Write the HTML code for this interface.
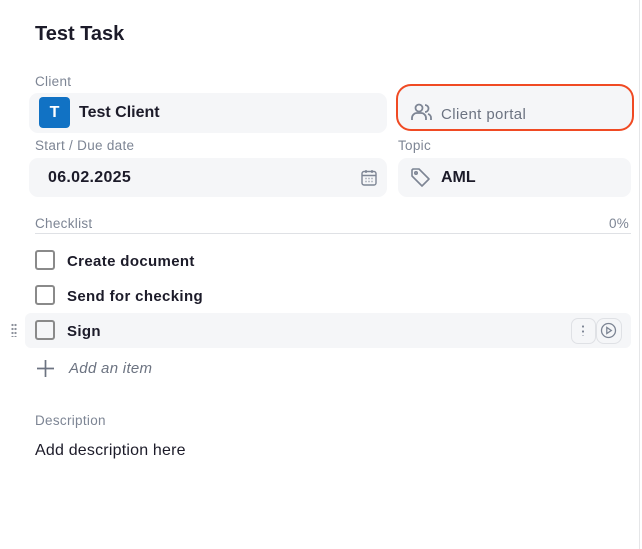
<!DOCTYPE html><html><head><style>
body{margin:0;width:642px;height:549px;background:#fff;font-family:"Liberation Sans",sans-serif;position:relative;overflow:hidden;color:#1c1b29}
.a{position:absolute}
.lbl{font-size:13.5px;color:#7d8594;letter-spacing:.3px}
.box{background:#f5f6f8;border-radius:9px}
.cb{position:absolute;left:35px;width:16px;height:16px;border:2px solid #8a8a8a;border-radius:3px}
.it{position:absolute;left:67px;font-size:15px;font-weight:bold;color:#1c1b29;letter-spacing:.35px}
</style></head><body>
<div class="a" style="left:35px;top:23px;font-size:20px;font-weight:bold">Test Task</div>
<div class="a lbl" style="left:35px;top:74px">Client</div>
<div class="a box" style="left:29px;top:93px;width:358px;height:40px"></div>
<div class="a" style="left:39px;top:97px;width:31px;height:31px;background:#1172c4;border-radius:4px;color:#fff;font-weight:bold;font-size:16px;text-align:center;line-height:31px">T</div>
<div class="a" style="left:79px;top:104px;font-size:16px;font-weight:bold">Test Client</div>
<div class="a" style="left:396px;top:84px;width:234px;height:43px;border:2px solid #f04a23;border-radius:15px;background:#f5f6f8"></div>
<svg class="a" style="left:411px;top:103px" width="22" height="18" viewBox="0 0 22 18" fill="none" stroke="#7d8594" stroke-width="1.8"><circle cx="8" cy="5" r="3.5"/><path d="M1 17v-2a5 5 0 0 1 5-5h4a5 5 0 0 1 5 5v2"/><path d="M14 2a3.5 3.5 0 0 1 0 7M17 11a4 4 0 0 1 3 4v2"/></svg>
<div class="a" style="left:441px;top:106px;font-size:15px;color:#6c7381;letter-spacing:.4px">Client portal</div>
<div class="a lbl" style="left:35px;top:138px">Start / Due date</div>
<div class="a lbl" style="left:398px;top:138px">Topic</div>
<div class="a box" style="left:29px;top:158px;width:358px;height:39px"></div>
<div class="a" style="left:48px;top:169px;font-size:16px;font-weight:bold;letter-spacing:.3px">06.02.2025</div>
<svg class="a" style="left:361px;top:169px" width="16" height="17" viewBox="0 0 16 17" fill="none" stroke="#7d8594" stroke-width="1.4"><rect x="1" y="2.5" width="14" height="13.5" rx="2"/><path d="M1 6.5h14M5 1v3M11 1v3"/><path d="M4.5 9.5h1M7.5 9.5h1M10.5 9.5h1M4.5 12.5h1M7.5 12.5h1M10.5 12.5h1"/></svg>
<div class="a box" style="left:398px;top:158px;width:233px;height:39px"></div>
<svg class="a" style="left:410px;top:167px" width="22" height="22" viewBox="0 0 22 22" fill="none" stroke="#7d8594" stroke-width="1.6"><path d="M2 3v6l10 10 7-7L9 2H3z" stroke-linejoin="round"/><circle cx="6" cy="6" r="1.2"/></svg>
<div class="a" style="left:441px;top:169px;font-size:16px;font-weight:bold">AML</div>
<div class="a lbl" style="left:35px;top:216px">Checklist</div>
<div class="a lbl" style="left:609px;top:216px">0%</div>
<div class="a" style="left:35px;top:233px;width:596px;height:1px;background:#dfe1e5"></div>
<div class="cb" style="top:250px"></div><div class="it" style="top:253px">Create document</div>
<div class="cb" style="top:285px"></div><div class="it" style="top:288px">Send for checking</div>
<div class="a" style="left:25px;top:313px;width:606px;height:35px;background:#f5f6f8;border-radius:6px"></div>
<div class="a" style="left:11px;top:323px;width:6px;height:14px;background:radial-gradient(circle,#8a8f99 1px,transparent 1.3px) 0 0/3px 4px"></div>
<div class="cb" style="top:320px"></div><div class="it" style="top:323px">Sign</div>
<div class="a" style="left:571px;top:318px;width:23px;height:24px;border:1px solid #dfe1e5;border-radius:7px;background:#f5f6f8"></div>
<div class="a" style="left:582px;top:324px;width:2px;height:12px;background:radial-gradient(circle,#7d8594 1px,transparent 1.2px) 0 0/2px 5px"></div>
<div class="a" style="left:596px;top:318px;width:24px;height:24px;border:1px solid #dfe1e5;border-radius:8px;background:#f5f6f8"></div>
<svg class="a" style="left:600px;top:322px" width="17" height="17" viewBox="0 0 17 17" fill="none" stroke="#7d8594" stroke-width="1.3"><circle cx="8.5" cy="8.5" r="7"/><path d="M6.8 5.5v6l4.5-3z"/></svg>
<svg class="a" style="left:36px;top:359px" width="19" height="19" viewBox="0 0 19 19" stroke="#6c7381" stroke-width="1.7"><path d="M9.5 1v17M1 9.5h17"/></svg>
<div class="a" style="left:69px;top:360px;font-size:15px;font-style:italic;color:#6c7381;letter-spacing:.3px">Add an item</div>
<div class="a lbl" style="left:35px;top:413px">Description</div>
<div class="a" style="left:35px;top:442px;font-size:16px;letter-spacing:.2px">Add description here</div>
<div class="a" style="left:639px;top:0;width:1px;height:549px;background:#e5e6e8"></div>
</body></html>
